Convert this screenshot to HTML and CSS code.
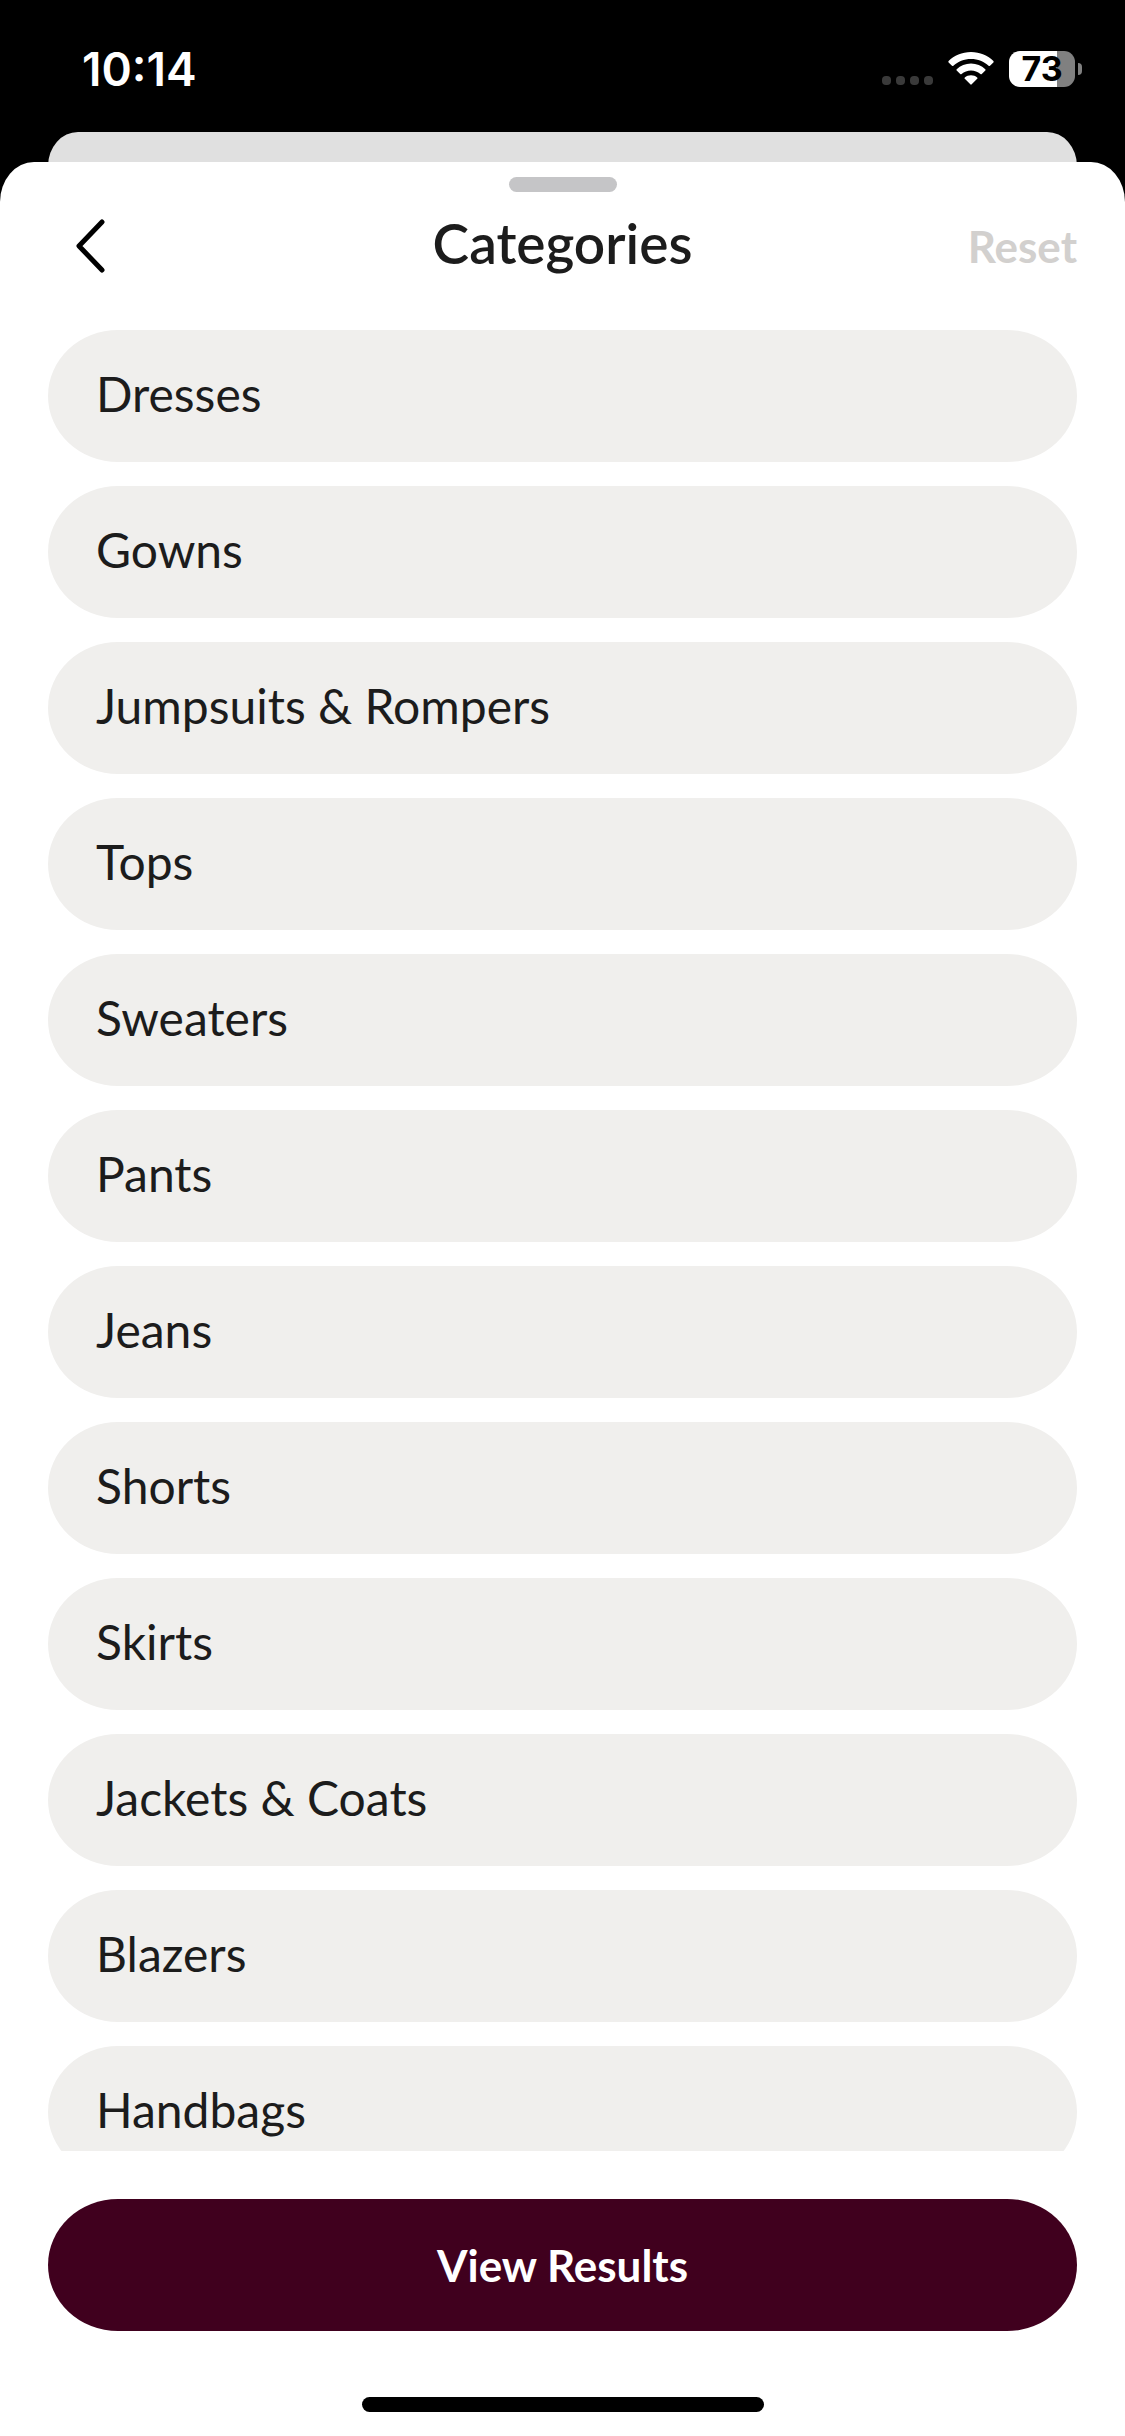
FILE: index.html
```html
<!DOCTYPE html>
<html lang="en">
<head>
  <meta charset="UTF-8">
  <meta name="viewport" content="width=device-width, initial-scale=1.0">
  <title>Categories</title>
  <link rel="stylesheet" href="styles.css">
</head>
<body>

  <div class="status-bar">
    <span class="time">10:14</span>
    <div class="status-icons">
      <div class="signal">
        <span class="dot"></span>
        <span class="dot"></span>
        <span class="dot"></span>
        <span class="dot"></span>
      </div>
      <svg class="wifi" viewBox="0 0 46 34" width="46" height="34" aria-hidden="true">
        <path d="M23 0C14 0 6 3.500 .6 9Q0 9.700 .6 10.400L4 13.700Q4.700 14.300 5.400 13.700C10 9.400 16 6.900 23 6.900S36 9.400 40.600 13.700Q41.300 14.300 42 13.700L45.400 10.400Q46 9.700 45.400 9C40 3.500 32 0 23 0Z"/>
        <path d="M23 11.500C17.500 11.500 12.500 13.600 8.700 17.200Q8 17.900 8.700 18.600L12.200 22Q12.900 22.600 13.600 22C16.200 19.700 19.500 18.400 23 18.400S29.800 19.700 32.400 22Q33.100 22.600 33.800 22L37.300 18.600Q38 17.900 37.300 17.200C33.500 13.600 28.500 11.500 23 11.500Z"/>
        <path d="M23 23.200C20.600 23.200 18.500 24 16.800 25.400Q16.100 26.100 16.800 26.800L22.300 32.300Q23 33 23.700 32.300L29.200 26.800Q29.900 26.100 29.200 25.400C27.500 24 25.400 23.200 23 23.200Z"/>
      </svg>
      <div class="battery">
        <span class="battery-level">73</span>
        <span class="battery-cap"></span>
      </div>
    </div>
  </div>

  <div class="back-card"></div>

  <main class="sheet">
    <div class="handle"></div>

    <header class="sheet-header">
      <button type="button" class="back" aria-label="Back">
        <svg viewBox="0 0 30 54" width="30" height="54" aria-hidden="true">
          <path d="M27 3L4 27L27 51"/>
        </svg>
      </button>
      <h1 class="title">Categories</h1>
      <button type="button" class="reset" disabled>Reset</button>
    </header>

    <div class="category-list">
      <button type="button" class="category">Dresses</button>
      <button type="button" class="category">Gowns</button>
      <button type="button" class="category">Jumpsuits &amp; Rompers</button>
      <button type="button" class="category">Tops</button>
      <button type="button" class="category">Sweaters</button>
      <button type="button" class="category">Pants</button>
      <button type="button" class="category">Jeans</button>
      <button type="button" class="category">Shorts</button>
      <button type="button" class="category">Skirts</button>
      <button type="button" class="category">Jackets &amp; Coats</button>
      <button type="button" class="category">Blazers</button>
      <button type="button" class="category">Handbags</button>
    </div>

    <footer class="sheet-footer">
      <button type="button" class="view-results">View Results</button>
      <div class="home-indicator"></div>
    </footer>
  </main>

</body>
</html>
```
FILE: styles.css
```css
* {
  box-sizing: border-box;
}

body {
  display: flex;
  flex-direction: column;
  height: 100vh;
  margin: 0;
  background-color: #000;
  color: #1c1c1c;
  font-family: Lato, "Open Sans", sans-serif;
}

button {
  padding: 0;
  border: none;
  background: none;
  color: inherit;
  font-family: inherit;
  cursor: pointer;
}

/* Status bar */
.status-bar {
  display: flex;
  flex: none;
  justify-content: space-between;
  align-items: center;
  height: 132px;
  padding: 6px 43px 0 82px;
  color: #fff;
  font-family: Inter, sans-serif;
}

.time {
  font-size: 46px;
  font-weight: 600;
}

.status-icons {
  display: flex;
  align-items: center;
}

.signal {
  display: flex;
  gap: 5px;
  margin-right: 15px;
  padding-top: 23px;
}

.dot {
  width: 9px;
  height: 9px;
  border-radius: 4px;
  background-color: #3a3a3a;
}

.wifi {
  margin-right: 15px;
  fill: #fff;
}

.battery {
  display: flex;
  align-items: center;
  gap: 3px;
}

.battery-level {
  width: 66px;
  border-radius: 11px;
  background: linear-gradient(to right, #fff 73%, #808080 73%);
  color: #000;
  font-size: 34px;
  font-weight: 700;
  line-height: 36px;
  text-align: center;
}

.battery-cap {
  width: 4px;
  height: 12px;
  border-radius: 0 4px 4px 0;
  background-color: #808080;
}

/* Page behind the sheet */
.back-card {
  flex: none;
  height: 70px;
  margin: 0 48px -40px;
  border-radius: 30px 30px 0 0 / 34px 34px 0 0;
  background-color: #e0e0e0;
}

/* Sheet */
.sheet {
  display: flex;
  flex: 1;
  flex-direction: column;
  min-height: 0;
  padding-top: 15px;
  border-radius: 34px 34px 0 0 / 40px 40px 0 0;
  background-color: #fff;
}

.handle {
  flex: none;
  align-self: center;
  width: 108px;
  height: 15px;
  border-radius: 8px;
  background-color: #c5c5c7;
}

.sheet-header {
  display: grid;
  grid-template-columns: 1fr auto 1fr;
  align-items: center;
  height: 108px;
  margin-bottom: 30px;
  padding: 0 48px;
}

.back {
  justify-self: start;
  padding: 0 27px;
}

.back svg {
  display: block;
  fill: none;
  stroke: #000;
  stroke-width: 5;
  stroke-linecap: round;
  stroke-linejoin: round;
}

.title {
  margin: 0;
  padding-bottom: 6px;
  font-size: 55px;
  font-weight: 600;
}

.reset {
  justify-self: end;
  color: #d2d0ce;
  font-size: 44px;
  font-weight: 700;
}

.category-list {
  display: flex;
  flex: 1;
  flex-direction: column;
  gap: 24px;
  min-height: 0;
  padding: 0 48px;
  overflow-y: auto;
  scrollbar-width: none;
}

.category {
  flex: none;
  height: 132px;
  padding: 0 48px 6px;
  border-radius: 70px / 66px;
  background-color: #f0efed;
  font-size: 48px;
  text-align: left;
}

.sheet-footer {
  display: flex;
  flex-direction: column;
  padding: 48px 48px 24px;
}

.view-results {
  height: 132px;
  margin-bottom: 66px;
  border-radius: 70px / 66px;
  background-color: #40001e;
  color: #fff;
  font-size: 44px;
  font-weight: 700;
}

.home-indicator {
  align-self: center;
  width: 402px;
  height: 15px;
  border-radius: 8px;
  background-color: #000;
}
```
